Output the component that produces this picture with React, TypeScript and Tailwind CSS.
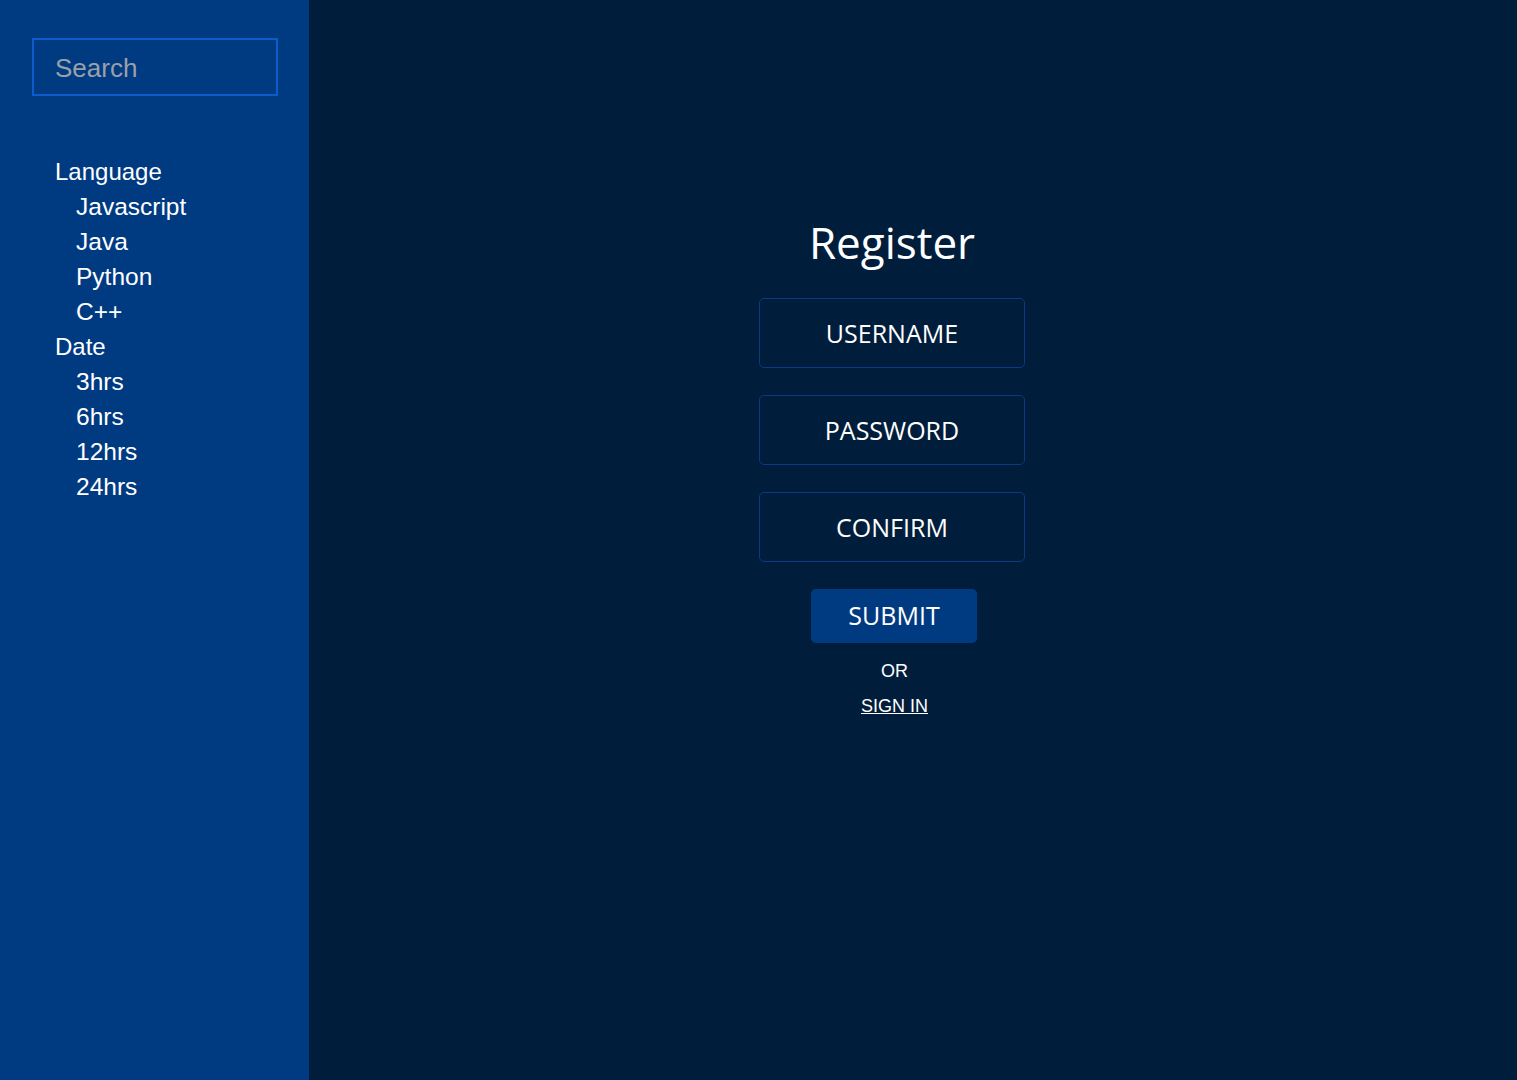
import { useState } from "react";

const menu = [
  { title: "Language", items: ["Javascript", "Java", "Python", "C++"] },
  { title: "Date", items: ["3hrs", "6hrs", "12hrs", "24hrs"] },
];

export default function App() {
  const [search, setSearch] = useState("");

  return (
    <div className="flex min-h-screen w-full bg-[#001e3b]">
      {/* Sidebar */}
      <aside className="w-[309px] shrink-0 bg-[#003b82] pt-[38px] font-['Liberation_Sans',Arial,sans-serif]">
        <div className="px-[32px]">
          <input
            type="text"
            placeholder="Search"
            value={search}
            onChange={(e) => setSearch(e.target.value)}
            className="h-[58px] w-[246px] border-2 border-[#0c5ccc] bg-transparent px-[21px] pt-[2px] text-[26px] text-white placeholder:text-[#9aa0a8] focus:outline-none"
          />
        </div>
        <nav className="mt-[58px] pl-[55px] text-[24px] leading-[35px] text-white">
          {menu.map((group) => (
            <div key={group.title}>
              <div>{group.title}</div>
              {group.items.map((item) => (
                <div key={item} className="pl-[21px] text-[24.5px]">
                  {item}
                </div>
              ))}
            </div>
          ))}
        </nav>
      </aside>

      {/* Register form */}
      <main className="flex flex-1 justify-center pr-[42px] pt-[211px]">
        <form
          onSubmit={(e) => e.preventDefault()}
          className="flex w-[266px] flex-col items-center font-['Open_Sans','Noto_Sans',sans-serif] text-white"
        >
          <h1 className="mb-[25px] text-[44px] leading-[62px]">Register</h1>
          {["USERNAME", "PASSWORD", "CONFIRM"].map((label) => (
            <input
              key={label}
              type={label === "USERNAME" ? "text" : "password"}
              placeholder={label}
              className="mb-[27px] h-[70px] w-[266px] rounded-[5px] border border-[#0a3a82] bg-transparent text-center text-[25px] text-white placeholder:text-white focus:outline-none"
            />
          ))}
          <button
            type="submit"
            className="ml-[4px] h-[54px] w-[166px] rounded-[5px] bg-[#003b82] text-[25px] text-white"
          >
            SUBMIT
          </button>
          <div className="ml-[5px] mt-[15px] font-['Liberation_Sans',Arial,sans-serif] text-[18px] leading-[26px]">
            OR
          </div>
          <a
            href="#"
            className="ml-[5px] mt-[9px] font-['Liberation_Sans',Arial,sans-serif] text-[18px] leading-[26px] underline"
          >
            SIGN IN
          </a>
        </form>
      </main>
    </div>
  );
}
